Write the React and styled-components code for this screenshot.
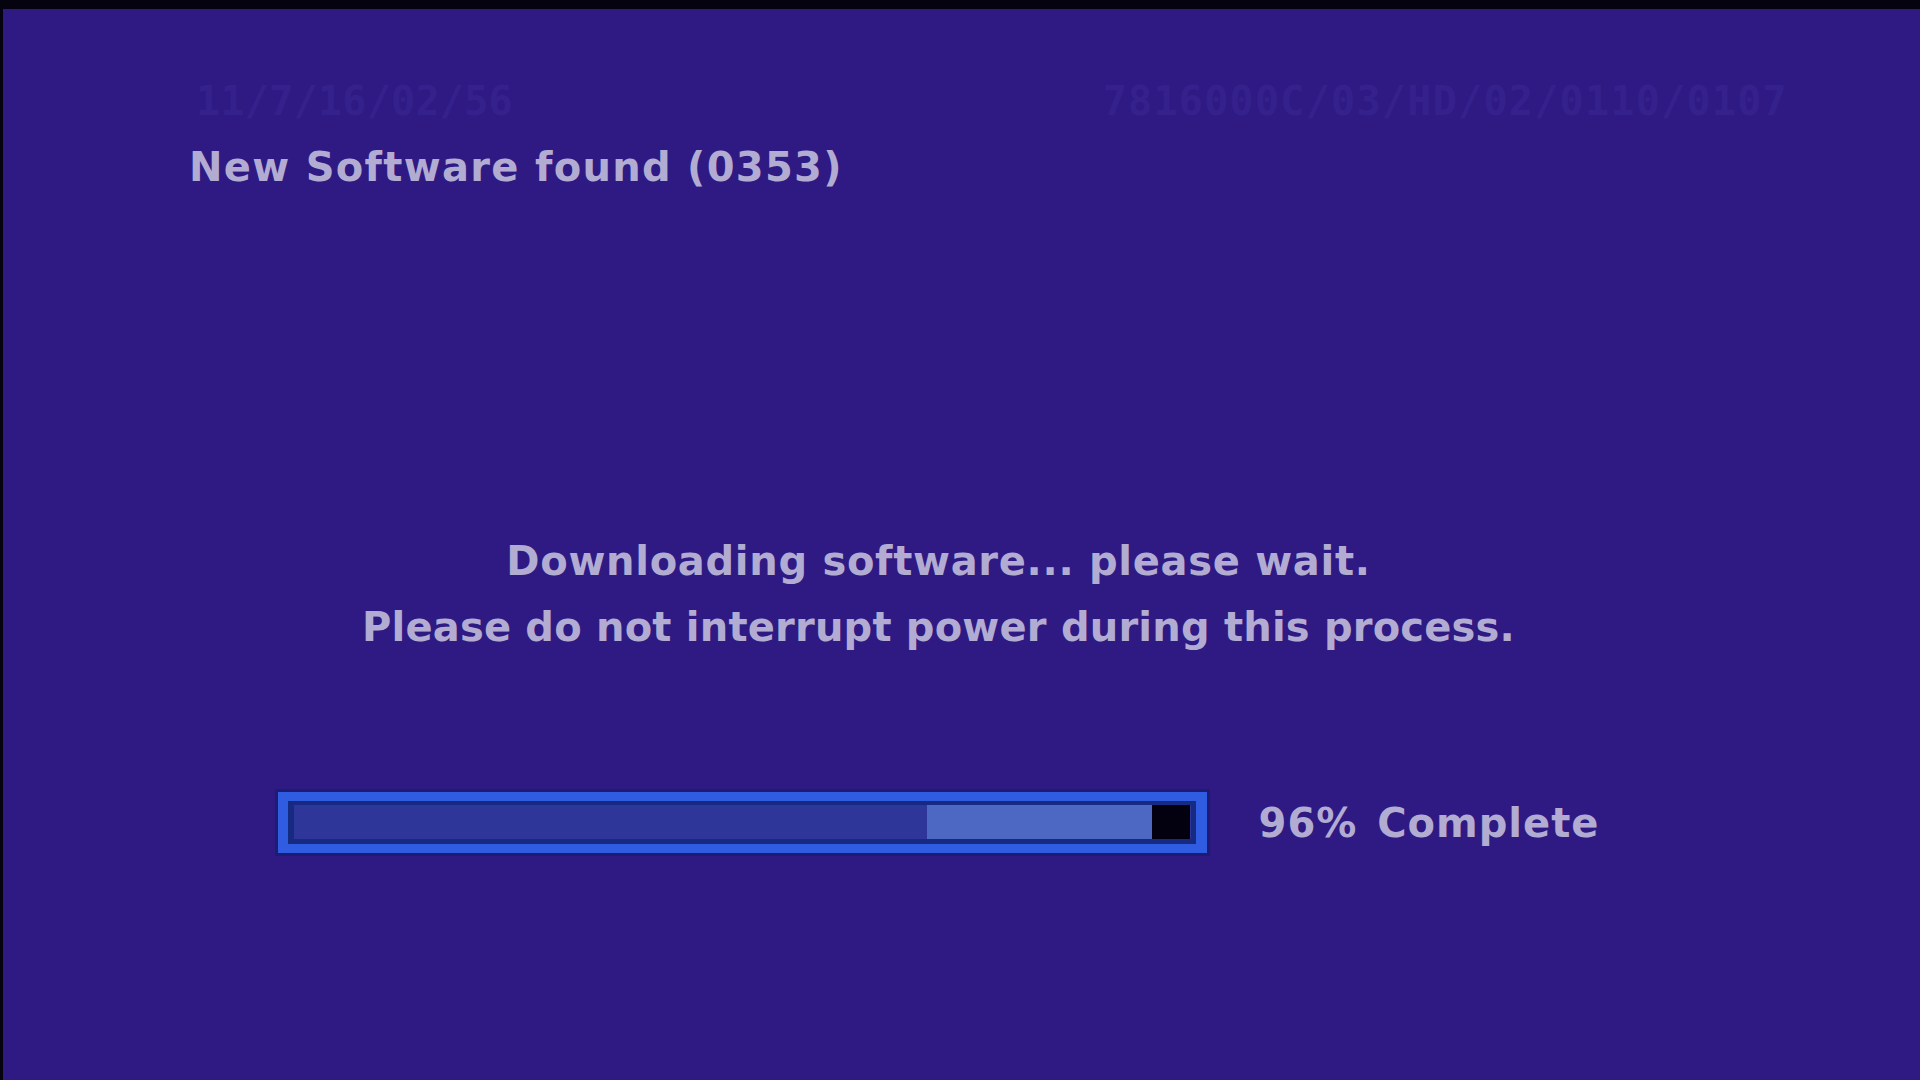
import React from "react";
import styled, { createGlobalStyle } from "styled-components";

const Global = createGlobalStyle`
  html, body { margin: 0; padding: 0; background: #05030f; }
  #root { width: 1920px; height: 1080px; }
`;

const Screen = styled.div`
  box-sizing: border-box;
  width: 1920px;
  height: 1080px;
  border-top: 9px solid #05030f;
  border-left: 3px solid #05030f;
  background: #2f1a84;
  color: #b2acd2;
  font-family: "DejaVu Sans", "Liberation Sans", sans-serif;
  font-weight: bold;
  display: flex;
  flex-direction: column;
  overflow: hidden;
`;

const GhostRow = styled.div`
  display: flex;
  justify-content: space-between;
  margin-top: 68px;
  padding: 0 132px 0 193px;
  height: 48px;
  font-family: "DejaVu Sans Mono", "Liberation Mono", monospace;
  font-size: 40px;
  line-height: 48px;
  color: #35218c;
`;

const GhostText = styled.span`
  white-space: nowrap;
  letter-spacing: ${(p) => p.$spacing};
`;

const Title = styled.div`
  margin-top: 18px;
  padding-left: 186px;
  font-size: 40px;
  line-height: 48px;
  letter-spacing: 1.3px;
  white-space: nowrap;
`;

const Main = styled.div`
  display: flex;
  flex-direction: column;
  align-items: center;
  padding-right: 46px;
`;

const Message = styled.div`
  margin-top: 337px;
  display: flex;
  flex-direction: column;
  align-items: center;
`;

const MessageLine = styled.div`
  font-size: 40px;
  line-height: 66px;
  letter-spacing: ${(p) => p.$spacing};
  white-space: nowrap;
`;

const ProgressRow = styled.div`
  margin-top: 132px;
  display: flex;
  align-items: center;
  gap: 52px;
`;

const BarFrame = styled.div`
  box-sizing: border-box;
  width: 929px;
  height: 61px;
  border: 9px solid #2f5ce0;
  border-left-width: 10px;
  border-right-width: 11px;
  box-shadow: 0 0 0 3px rgba(22, 30, 110, 0.7);
  display: flex;
`;

const BarTrack = styled.div`
  flex: 1;
  display: flex;
  border: 4px solid #152a80;
  border-bottom-width: 5px;
  border-left-width: 6px;
  border-right-width: 5px;
  background: #2e3799;
`;

const Segment = styled.div`
  height: 100%;
  flex: 0 0 auto;
  background: ${(p) => p.$color};
`;

const Percent = styled.div`
  font-size: 40px;
  line-height: 48px;
  letter-spacing: 1px;
  word-spacing: 5px;
  white-space: nowrap;
`;

export default function App() {
  const segments = [
    { w: 633, color: "#2e3799" },
    { w: 225, color: "#4d68c2" },
    { w: 38, color: "#03000f" },
  ];
  return (
    <>
      <Global />
      <Screen>
        <GhostRow>
          <GhostText $spacing="0.3px">11/7/16/02/56</GhostText>
          <GhostText $spacing="1.3px">7816000C/03/HD/02/0110/0107</GhostText>
        </GhostRow>
        <Title>New Software found (0353)</Title>
        <Main>
          <Message>
            <MessageLine $spacing="0.7px">Downloading software... please wait.</MessageLine>
            <MessageLine $spacing="0.2px">Please do not interrupt power during this process.</MessageLine>
          </Message>
          <ProgressRow>
            <BarFrame>
              <BarTrack>
                {segments.map((s, i) => (
                  <Segment key={i} $color={s.color} style={{ width: s.w }} />
                ))}
              </BarTrack>
            </BarFrame>
            <Percent>96% Complete</Percent>
          </ProgressRow>
        </Main>
      </Screen>
    </>
  );
}
